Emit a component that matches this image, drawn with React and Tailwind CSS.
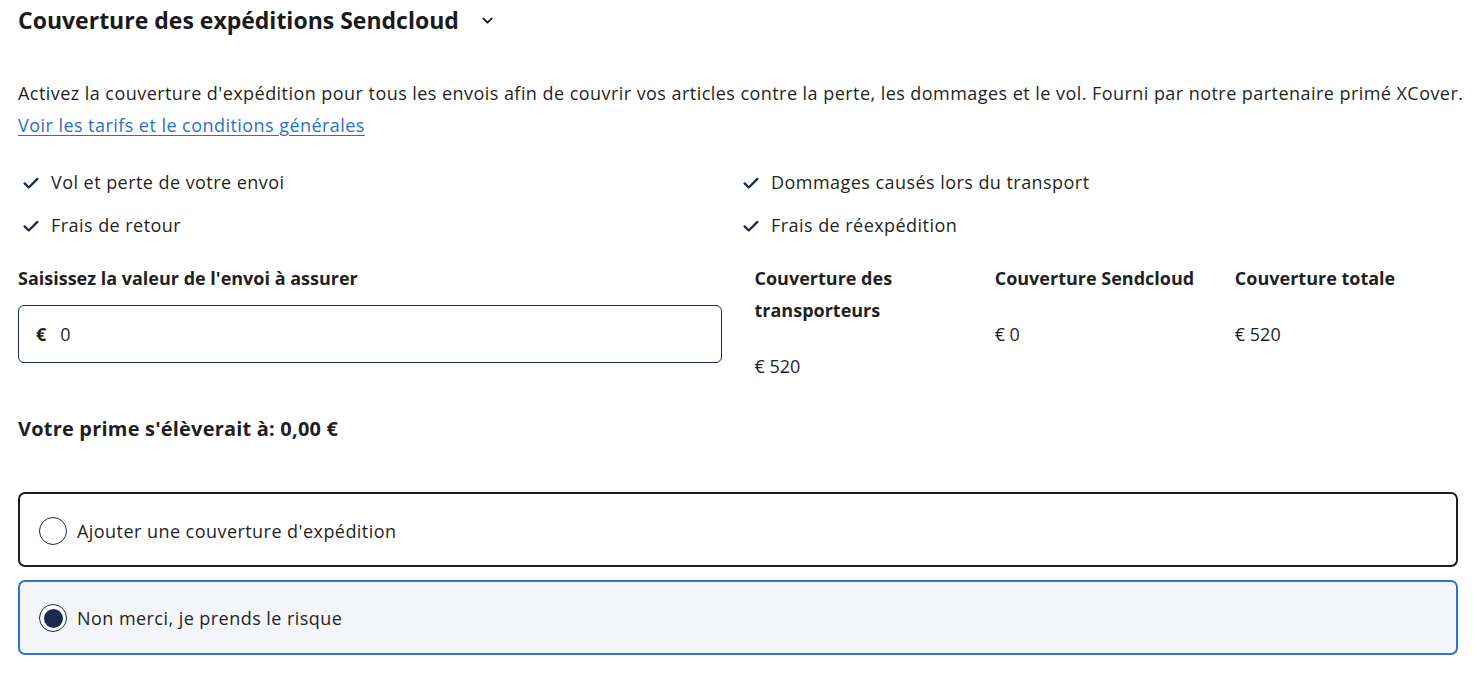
import React, { useState } from 'react';
import { ChevronDown } from 'lucide-react';

const CheckIcon = () => (
  <svg width="18" height="18" viewBox="0 0 24 24" fill="none" stroke="#1b2a4e" strokeWidth="3.1" strokeLinecap="round" strokeLinejoin="round" className="shrink-0">
    <path d="M3.5 12.5l5.5 5.5L20.5 6.5" />
  </svg>
);

const features = [
  'Vol et perte de votre envoi',
  'Dommages causés lors du transport',
  'Frais de retour',
  'Frais de réexpédition',
];

const Radio = ({ checked }) => (
  <span className="w-[28px] h-[28px] rounded-full border-[1.5px] border-[#1b2a4e] bg-white flex items-center justify-center shrink-0">
    {checked && <span className="w-[19px] h-[19px] rounded-full bg-[#1b2a4e]" />}
  </span>
);

const App = () => {
  const [choice, setChoice] = useState('no');
  const [value, setValue] = useState('0');

  return (
    <div className="w-full min-h-screen bg-white px-[18px] text-[#1f1f1f]" style={{ fontFamily: '"Open Sans", Lato, sans-serif' }}>
      {/* Header */}
      <div className="h-[40px] flex items-center gap-[20px]">
        <h2 className="text-[23px] font-bold text-[#1a1a1a] leading-[40px]">Couverture des expéditions Sendcloud</h2>
        <ChevronDown size={17} strokeWidth={2.4} className="text-[#1a1a1a]" />
      </div>

      {/* Description */}
      <p className="mt-[37px] text-[18px] leading-[32px] tracking-[0.45px] whitespace-nowrap">
        Activez la couverture d'expédition pour tous les envois afin de couvrir vos articles contre la perte, les dommages et le vol. Fourni par notre partenaire primé XCover.
      </p>
      <a href="#" className="text-[18px] leading-[32px] tracking-[0.45px] text-[#2a6fcb] underline underline-offset-[3px]">
        Voir les tarifs et le conditions générales
      </a>

      {/* Features */}
      <div className="mt-[20px] grid grid-cols-2">
        {features.map((f) => (
          <div key={f} className="h-[43px] flex items-center gap-[11px] pl-[4px]">
            <CheckIcon />
            <span className="text-[18px] tracking-[0.45px]">{f}</span>
          </div>
        ))}
      </div>

      {/* Value + coverage */}
      <div className="mt-[15px] grid grid-cols-2 gap-x-[33px]">
        <div>
          <div className="text-[18px] font-bold leading-[32px]">Saisissez la valeur de l'envoi à assurer</div>
          <div className="mt-[11px] h-[58px] rounded-[6px] border border-[#1b2a4e] flex items-center px-[17px]">
            <span className="text-[18px] font-bold">€</span>
            <input
              value={value}
              onChange={(e) => setValue(e.target.value)}
              className="ml-[14px] flex-1 text-[18px] outline-none bg-transparent"
            />
          </div>
        </div>
        <div className="grid grid-cols-3 gap-x-[17px]">
          <div>
            <div className="text-[18px] font-bold leading-[32px]">Couverture des transporteurs</div>
            <div className="mt-[24px] text-[18px] leading-[32px]">€ 520</div>
          </div>
          <div>
            <div className="text-[18px] font-bold leading-[32px] whitespace-nowrap">Couverture Sendcloud</div>
            <div className="mt-[24px] text-[18px] leading-[32px]">€ 0</div>
          </div>
          <div>
            <div className="text-[18px] font-bold leading-[32px] whitespace-nowrap">Couverture totale</div>
            <div className="mt-[24px] text-[18px] leading-[32px]">€ 520</div>
          </div>
        </div>
      </div>

      {/* Premium */}
      <div className="mt-[33px] text-[20px] font-bold leading-[28px] tracking-[0.2px]">Votre prime s'élèverait à: 0,00 €</div>

      {/* Options */}
      <div className="mt-[49px] flex flex-col gap-[13px]">
        <label
          onClick={() => setChoice('yes')}
          className={`h-[75px] rounded-[7px] border-2 flex items-center gap-[10px] pl-[19px] pt-[3px] cursor-pointer ${choice === 'yes' ? 'border-[#2f72d0] bg-[#f3f5f9]' : 'border-[#1e1e1e] bg-white'}`}
        >
          <Radio checked={choice === 'yes'} />
          <span className="text-[18px] tracking-[0.45px]">Ajouter une couverture d'expédition</span>
        </label>
        <label
          onClick={() => setChoice('no')}
          className={`h-[75px] rounded-[7px] border-2 flex items-center gap-[10px] pl-[19px] pt-[1px] cursor-pointer ${choice === 'no' ? 'border-[#2f72d0] bg-[#f3f5f9]' : 'border-[#1e1e1e] bg-white'}`}
        >
          <Radio checked={choice === 'no'} />
          <span className="text-[18px] tracking-[0.45px]">Non merci, je prends le risque</span>
        </label>
      </div>
    </div>
  );
};

export default App;
